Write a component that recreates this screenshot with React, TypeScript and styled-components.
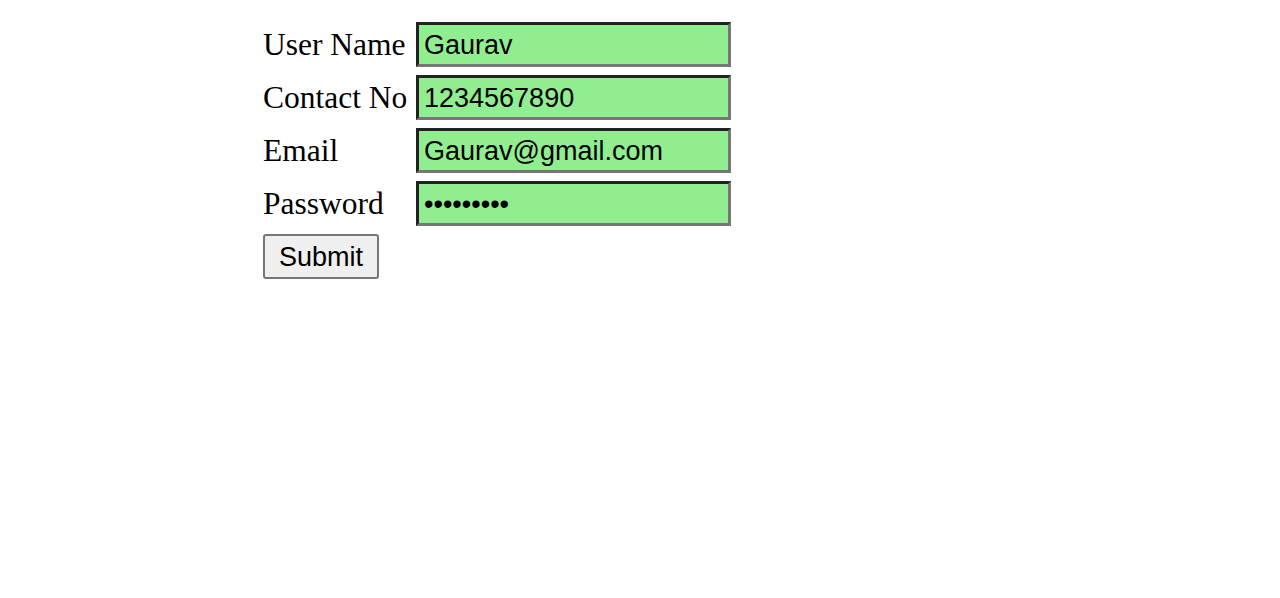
import React from "react";
import styled, { createGlobalStyle } from "styled-components";

const Global = createGlobalStyle`
  body {
    margin: 8px;
    background: #ffffff;
    font-family: "Liberation Serif", "Times New Roman", serif;
  }
`;

const Form = styled.form`
  display: grid;
  grid-template-columns: 153px 315px;
  row-gap: 8px;
  margin: 14px 0 0 255px;
  align-items: center;
`;

const Label = styled.label`
  font-family: "Liberation Serif", "Times New Roman", serif;
  font-size: 31.5px;
  color: #000;
  line-height: 1;
`;

const Input = styled.input`
  box-sizing: border-box;
  width: 315px;
  height: 45px;
  margin: 0;
  padding: 1px 5px 0;
  background: #90ee90;
  border-width: 3px;
  border-style: solid;
  border-color: #222222 #767676 #767676 #222222;
  font-family: "Liberation Sans", Arial, sans-serif;
  font-size: 27px;
  color: #000;
  outline: none;
`;

const Button = styled.button`
  grid-column: 1;
  justify-self: start;
  box-sizing: border-box;
  width: 116px;
  height: 45px;
  margin: 0;
  padding: 1px 0 0;
  background: #efefef;
  border: 2px solid #767676;
  border-radius: 3px;
  font-family: "Liberation Sans", Arial, sans-serif;
  font-size: 27px;
  color: #000;
`;

const fields = [
  { label: "User Name", type: "text", value: "Gaurav" },
  { label: "Contact No", type: "text", value: "1234567890" },
  { label: "Email", type: "text", value: "Gaurav@gmail.com" },
  { label: "Password", type: "password", value: "Gaurav123" },
];

export default function App() {
  return (
    <>
      <Global />
      <Form onSubmit={(e) => e.preventDefault()}>
        {fields.map((f) => (
          <React.Fragment key={f.label}>
            <Label>{f.label}</Label>
            <Input type={f.type} defaultValue={f.value} />
          </React.Fragment>
        ))}
        <Button type="submit">Submit</Button>
      </Form>
    </>
  );
}
